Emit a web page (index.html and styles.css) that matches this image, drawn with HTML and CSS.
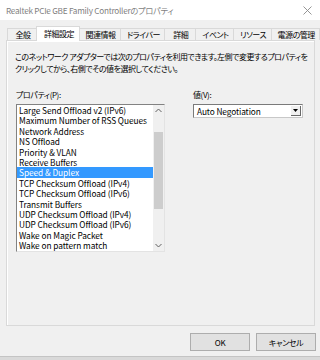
FILE: index.html
```html
<!DOCTYPE html>
<html lang="ja">
<head>
<meta charset="utf-8">
<title>プロパティ</title>
<link rel="stylesheet" href="styles.css">
</head>
<body>
<div class="titlebar">
  <span class="title">Realtek PCIe GBE Family Controllerのプロパティ</span>
  <svg class="close" width="9" height="9" viewBox="0 0 9 9"><path d="M0.5 0.5L8.5 8.5M8.5 0.5L0.5 8.5" stroke="#8a8a8a" stroke-width="0.9" fill="none"/></svg>
</div>
<div class="tabs">
  <div class="tab first">全般</div>
  <div class="tab active">詳細設定</div>
  <div class="tab">関連情報</div>
  <div class="tab">ドライバー</div>
  <div class="tab">詳細</div>
  <div class="tab">イベント</div>
  <div class="tab">リソース</div>
  <div class="tab">電源の管理</div>
</div>
<div class="panel">
  <p class="desc">このネットワーク アダプターでは次のプロパティを利用できます。左側で変更するプロパティを<br>クリックしてから、右側でその値を選択してください。</p>
  <div class="props">
    <div class="col">
      <div class="label">プロパティ(P):</div>
      <div class="listbox">
        <ul class="items">
          <li>Large Send Offload v2 (IPv6)</li>
          <li>Maximum Number of RSS Queues</li>
          <li>Network Address</li>
          <li>NS Offload</li>
          <li>Priority &amp; VLAN</li>
          <li>Receive Buffers</li>
          <li class="sel">Speed &amp; Duplex</li>
          <li>TCP Checksum Offload (IPv4)</li>
          <li>TCP Checksum Offload (IPv6)</li>
          <li>Transmit Buffers</li>
          <li>UDP Checksum Offload (IPv4)</li>
          <li>UDP Checksum Offload (IPv6)</li>
          <li>Wake on Magic Packet</li>
          <li>Wake on pattern match</li>
        </ul>
        <div class="scrollbar">
          <div class="arrow"><svg width="7" height="5" viewBox="0 0 7 5"><path d="M0.5 4L3.5 1L6.5 4" stroke="#606060" stroke-width="1" fill="none"/></svg></div>
          <div class="track"><div class="thumb"></div></div>
          <div class="arrow"><svg width="7" height="5" viewBox="0 0 7 5"><path d="M0.5 1L3.5 4L6.5 1" stroke="#606060" stroke-width="1" fill="none"/></svg></div>
        </div>
      </div>
    </div>
    <div class="col">
      <div class="label">値(V):</div>
      <div class="combo">
        <span class="combo-text">Auto Negotiation</span>
        <span class="combo-btn"><svg width="5" height="3" viewBox="0 0 5 3"><path d="M0 0H5L2.5 3Z" fill="#000"/></svg></span>
      </div>
    </div>
  </div>
</div>
<div class="footer">
  <button class="btn">OK</button>
  <button class="btn">キャンセル</button>
</div>
<div class="bottom"></div>
</body>
</html>
```
FILE: styles.css
```css
html, body {
  margin: 0;
  padding: 0;
}
body {
  width: 320px;
  height: 360px;
  overflow: hidden;
  background: #f0f0f0;
  font-family: "Noto Sans CJK JP", "Noto Sans", sans-serif;
  font-feature-settings: "palt";
  color: #000;
  display: flex;
  flex-direction: column;
}
.titlebar {
  height: 20px;
  flex: none;
  background: #fff;
  display: flex;
  align-items: center;
  justify-content: space-between;
  padding: 0 8px 0 6px;
  color: #7f7f7f;
  font-size: 8.2px;
  letter-spacing: -0.25px;
  white-space: nowrap;
}
.tabs {
  flex: none;
  display: flex;
  align-items: flex-end;
  height: 14px;
  margin-top: 6px;
  padding-left: 7px;
  font-size: 8px;
  letter-spacing: -0.5px;
}
.tab {
  height: 12px;
  box-sizing: border-box;
  min-width: 31px;
  padding: 0 5px 0 6px;
  line-height: 11px;
  text-align: center;
  white-space: nowrap;
  border-top: 1px solid #d9d9d9;
  border-right: 1px solid #d9d9d9;
  background: #f0f0f0;
}
.tab.first {
  border-left: 1px solid #d9d9d9;
}
.tab.active {
  position: relative;
  z-index: 1;
  height: 15px;
  margin: 0 -1px -1px -2px;
  padding: 1px 6px 0 7px;
  border-left: 1px solid #d9d9d9;
  background: #fff;
}
.panel {
  flex: none;
  height: 286px;
  box-sizing: border-box;
  margin: 0 5px 0 6px;
  border: 1px solid #d9d9d9;
  box-shadow: inset 1px 1px 0 #fff;
  padding: 10px 6px 0 8px;
}
.desc {
  margin: 0;
  font-size: 8px;
  letter-spacing: -0.5px;
  line-height: 12px;
  white-space: nowrap;
}
.props {
  display: grid;
  grid-template-columns: 149px 110px;
  column-gap: 28px;
  margin-top: 14px;
  padding-left: 1px;
}
.label {
  font-size: 8px;
  letter-spacing: -0.4px;
  line-height: 12px;
  height: 12px;
  margin-bottom: 3px;
  white-space: nowrap;
}
.listbox {
  height: 148px;
  box-sizing: border-box;
  display: flex;
  border-top: 1px solid #828282;
  border-left: 1px solid #828282;
  border-right: 1px solid #e3e3e3;
  border-bottom: 1px solid #e3e3e3;
  background: #fff;
}
.items {
  flex: 1;
  min-width: 0;
  margin: 0;
  padding: 0;
  list-style: none;
  font-size: 8.3px;
  letter-spacing: -0.05px;
  line-height: 10.4px;
  overflow: hidden;
}
.items li {
  padding-left: 2px;
  white-space: nowrap;
  height: 10.4px;
}
.items li.sel {
  background: #3399ff;
  color: #fff;
}
.scrollbar {
  width: 11px;
  flex: none;
  background: #f0f0f0;
  display: flex;
  flex-direction: column;
}
.arrow {
  height: 11px;
  display: flex;
  align-items: center;
  justify-content: center;
}
.track {
  flex: 1;
  display: flex;
  flex-direction: column;
  align-items: center;
}
.thumb {
  width: 9px;
  height: 77px;
  margin-top: 16px;
  background: #cdcdcd;
}
.combo {
  height: 14px;
  box-sizing: border-box;
  margin-top: 1px;
  display: flex;
  align-items: center;
  background: #fff;
  border-top: 1px solid #7a7a7a;
  border-left: 1px solid #7a7a7a;
  border-right: 1px solid #c8c8c8;
  border-bottom: 1px solid #c8c8c8;
}
.combo-text {
  flex: 1;
  padding-left: 3px;
  font-size: 8.3px;
  letter-spacing: -0.1px;
  line-height: 12px;
  white-space: nowrap;
}
.combo-btn {
  width: 10px;
  height: 10px;
  margin-right: 1px;
  box-sizing: border-box;
  border-right: 1px solid #696969;
  border-bottom: 1px solid #696969;
  background: #f0f0f0;
  display: flex;
  align-items: center;
  justify-content: center;
}
.footer {
  flex: none;
  display: flex;
  justify-content: flex-end;
  gap: 6px;
  margin-top: 7px;
  padding-right: 4px;
}
.btn {
  width: 60px;
  height: 18px;
  margin: 0;
  padding: 0;
  box-sizing: border-box;
  background: #e1e1e1;
  border: 1px solid #adadad;
  font-family: "Noto Sans CJK JP", "Noto Sans", sans-serif;
  font-feature-settings: "palt";
  font-size: 8px;
  letter-spacing: -0.4px;
  color: #000;
}
.bottom {
  flex: 1;
  margin-top: 5px;
  border-top: 1px solid #c4c4c4;
  background: #d9d9d9;
}
```
